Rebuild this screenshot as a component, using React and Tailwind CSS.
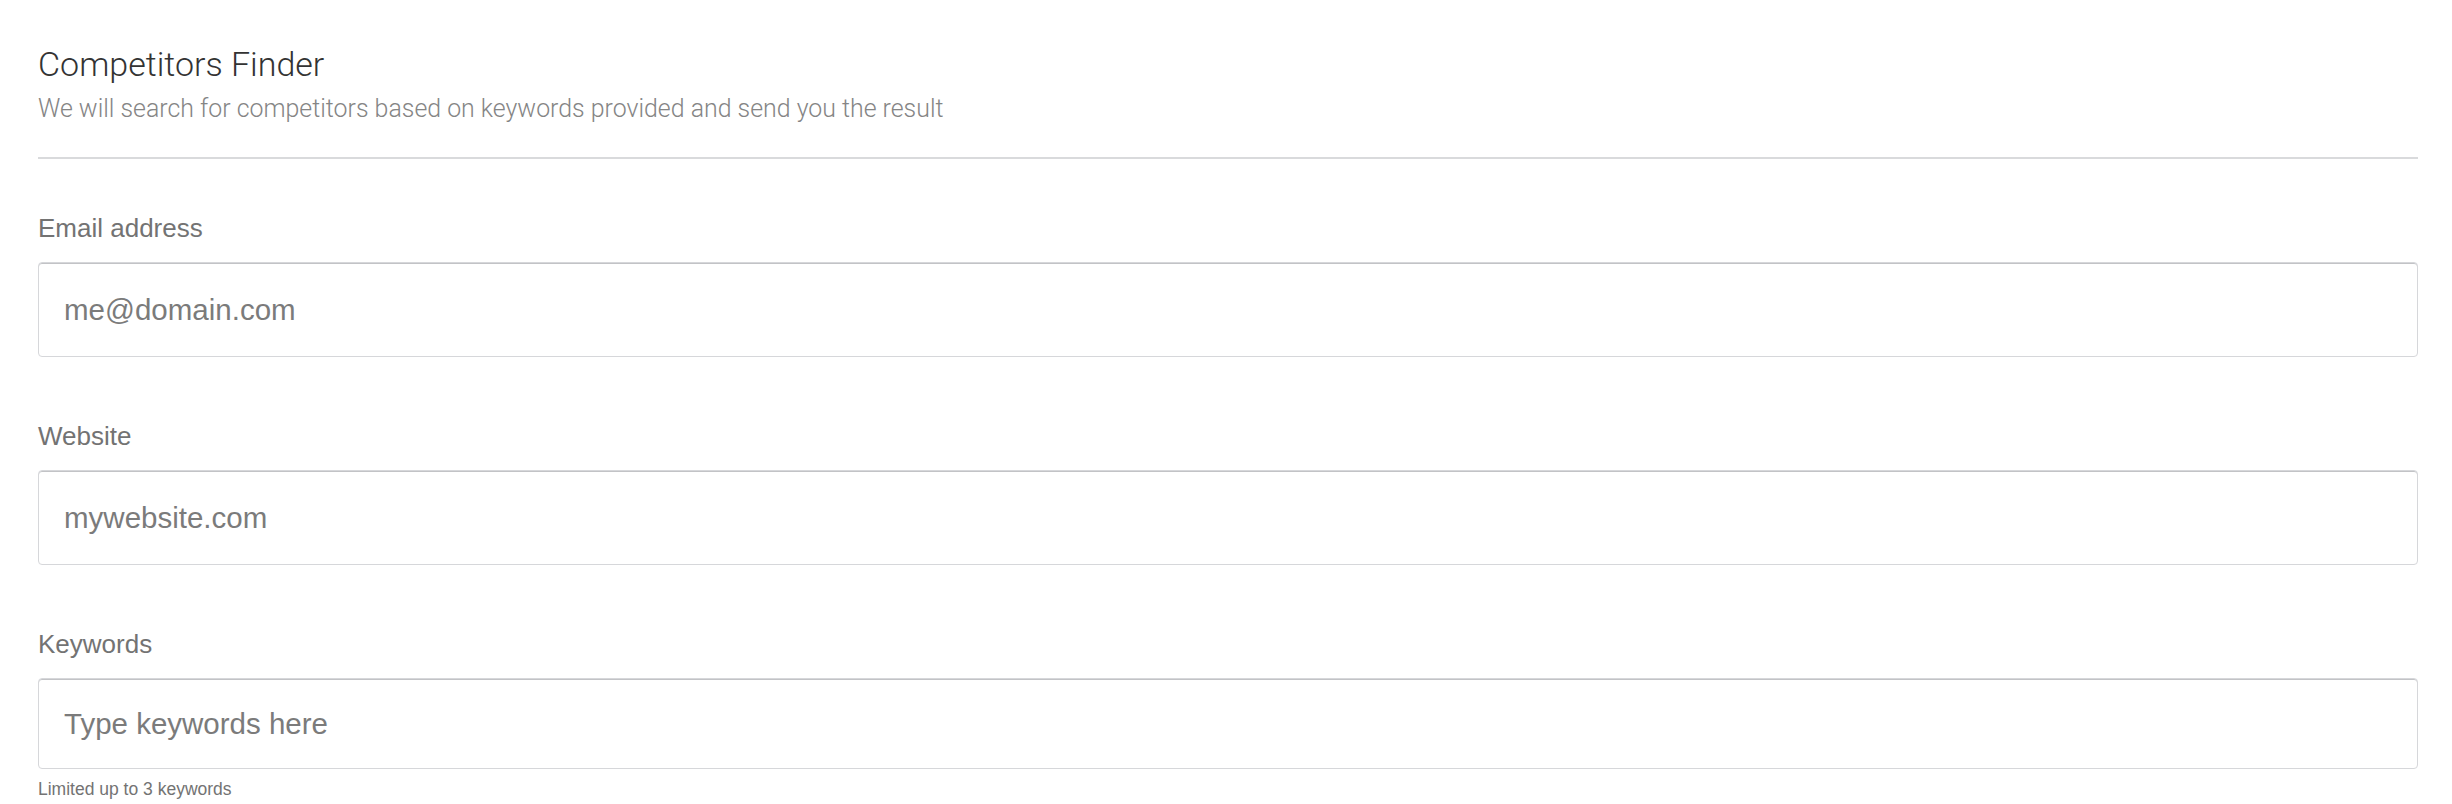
import React from "react";

const Field = ({ label, placeholder, tall = true, hint }) => (
  <div className="flex flex-col">
    <label className="text-[26px] leading-[30px] text-[#737373]">{label}</label>
    <input
      type="text"
      placeholder={placeholder}
      className={`mt-[19px] w-full rounded-[4px] border border-[#d6d7da] shadow-[inset_0_1px_0_#c2c3c6] bg-white px-[25px] text-[29.5px] text-[#555] placeholder:text-[#7b7b7b] outline-none ${tall ? "h-[95px]" : "h-[91px]"}`}
    />
    {hint && <p className="mt-[10px] text-[17.5px] leading-[20px] text-[#737373]">{hint}</p>}
  </div>
);

export default function App() {
  return (
    <div className="min-h-screen bg-white pl-[38px] pr-[34px] pt-[42px] font-['Liberation_Sans',Arial,sans-serif]">
      <h1 className="font-['Roboto',sans-serif] font-light text-[34px] leading-[44px] text-[#333]">
        Competitors Finder
      </h1>
      <p className="font-['Roboto',sans-serif] font-light text-[24.9px] leading-[30px] text-[#858585] mt-[8px]">
        We will search for competitors based on keywords provided and send you the result
      </p>
      <hr className="mt-[33px] border-0 h-[2px] bg-[#d9dadc]" />
      <form className="mt-[54px] flex flex-col gap-[64px]">
        <Field label="Email address" placeholder="me@domain.com" />
        <Field label="Website" placeholder="mywebsite.com" />
        <Field label="Keywords" placeholder="Type keywords here" tall={false} hint="Limited up to 3 keywords" />
      </form>
    </div>
  );
}
